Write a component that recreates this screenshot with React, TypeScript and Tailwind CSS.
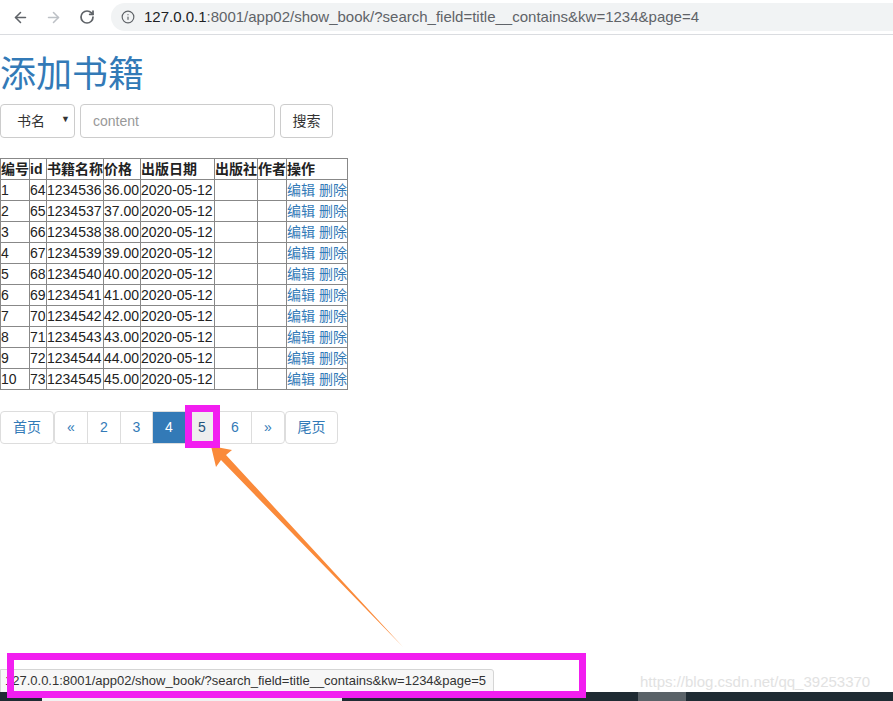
import { ArrowLeft, ArrowRight, RotateCw, Info } from 'lucide-react';

const rows = Array.from({ length: 10 }, (_, i) => ({
    no: i + 1,
    id: 64 + i,
    title: String(1234536 + i),
    price: `${36 + i}.00`,
    date: '2020-05-12',
}));

const colWidths = [29, 17, 57, 37, 74, 43, 28, 60];
const headers = ['编号', 'id', '书籍名称', '价格', '出版日期', '出版社', '作者', '操作'];

const pageUrl = '127.0.0.1:8001/app02/show_book/?search_field=title__contains&kw=1234&page=';

function PageItem({
    label,
    className = '',
}: {
    label: string;
    className?: string;
}) {
    return (
        <a
            className={`flex h-[33px] items-center justify-center border border-[#ddd] text-[14px] text-[#337ab7] ${className}`}
        >
            {label}
        </a>
    );
}

export default function App() {
    return (
        <div
            className="relative h-[701px] w-[893px] overflow-hidden bg-white text-[#333]"
            style={{ fontFamily: '"Liberation Sans", "Noto Sans CJK SC", sans-serif' }}
        >
            {/* Browser toolbar */}
            <div className="flex h-[35px] items-center border-b border-[#dadce0] pl-[12px]">
                <ArrowLeft className="h-[17px] w-[17px] text-[#5f6368]" strokeWidth={2.2} />
                <ArrowRight className="ml-[16px] h-[17px] w-[17px] text-[#bdc1c6]" strokeWidth={2.2} />
                <RotateCw className="ml-[17px] h-[16px] w-[16px] text-[#5f6368]" strokeWidth={2.6} />
                <div className="ml-[16px] flex h-[28px] flex-1 items-center rounded-l-full bg-[#f1f3f4] pl-[10px]">
                    <Info className="h-[14px] w-[14px] text-[#5f6368]" strokeWidth={2} />
                    <span className="ml-[9px] text-[15px] text-[#5f6368]">
                        <span className="text-[#202124]">127.0.0.1</span>
                        :8001/app02/show_book/?search_field=title__contains&amp;kw=1234&amp;page=4
                    </span>
                </div>
            </div>

            {/* Page content */}
            <div className="flex flex-col items-start">
                <h1 className="mt-[20px] mb-[9px] h-[40px] text-[36px] leading-[40px] font-normal text-[#337ab7]">
                    添加书籍
                </h1>

                <div className="flex items-center">
                    <div className="relative flex h-[34px] w-[75px] items-center rounded-[4px] border border-[#ccc] pl-[16px] text-[14px] text-[#333]">
                        书名
                        <span className="absolute right-[4px] top-[8px] text-[9px]">▼</span>
                    </div>
                    <div className="ml-[5px] flex h-[34px] w-[195px] items-center rounded-[4px] border border-[#ccc] pl-[12px] text-[14px] text-[#999]">
                        content
                    </div>
                    <div className="ml-[5px] flex h-[34px] w-[53px] items-center justify-center rounded-[4px] border border-[#ccc] text-[14px] text-[#333]">
                        搜索
                    </div>
                </div>

                {/* Book table */}
                <table className="mt-[20px] table-fixed border-collapse border border-[#333] text-[14px] leading-[20px] text-[#222]">
                    <colgroup>
                        {colWidths.map((w, i) => (
                            <col key={i} style={{ width: w }} />
                        ))}
                    </colgroup>
                    <thead>
                        <tr className="h-[21px]">
                            {headers.map((h) => (
                                <th key={h} className="overflow-hidden whitespace-nowrap border border-[#888] p-0 text-left font-bold">
                                    {h}
                                </th>
                            ))}
                        </tr>
                    </thead>
                    <tbody>
                        {rows.map((r) => (
                            <tr key={r.no} className="h-[21px]">
                                <td className="border border-[#888] p-0">{r.no}</td>
                                <td className="border border-[#888] p-0">{r.id}</td>
                                <td className="border border-[#888] p-0">{r.title}</td>
                                <td className="border border-[#888] p-0">{r.price}</td>
                                <td className="border border-[#888] p-0">{r.date}</td>
                                <td className="border border-[#888] p-0"></td>
                                <td className="border border-[#888] p-0"></td>
                                <td className="overflow-hidden whitespace-nowrap border border-[#888] p-0 text-[#337ab7]">
                                    编辑 删除
                                </td>
                            </tr>
                        ))}
                    </tbody>
                </table>

                {/* Pagination */}
                <div className="mt-[21px] flex">
                    <PageItem label="首页" className="w-[54px] rounded-[4px]" />
                    <div className="flex">
                        <PageItem label="«" className="w-[34px] rounded-l-[4px]" />
                        <PageItem label="2" className="-ml-px w-[34px]" />
                        <PageItem label="3" className="-ml-px w-[33px]" />
                        <PageItem label="4" className="-ml-px w-[34px] border-[#337ab7] bg-[#337ab7] text-white" />
                        <PageItem label="5" className="-ml-px w-[34px] bg-[#eee] text-[#23527c]" />
                        <PageItem label="6" className="-ml-px w-[34px]" />
                        <PageItem label="»" className="-ml-px w-[34px] rounded-r-[4px]" />
                    </div>
                    <PageItem label="尾页" className="w-[53px] rounded-[4px]" />
                </div>
            </div>

            {/* Annotation arrow */}
            <svg className="pointer-events-none absolute left-0 top-0" width="893" height="701">
                <polygon
                    points="211,446 232,450 226,455 403,647 221,460 216,467"
                    fill="#fa8a3a"
                />
            </svg>

            {/* Highlight box around page 5 */}
            <div className="absolute left-[185px] top-[405px] h-[43px] w-[35px] border-[7px] border-[#f21ef0]" />

            {/* Status bubble */}
            <div className="absolute left-0 top-[669px] h-[24px] w-[494px] rounded-tr-[3px] border border-[#d5d5d5] bg-[#f7f7f7] pl-[4px] text-[13px] leading-[22px] text-[#333]">
                {pageUrl}5
            </div>

            {/* Watermark */}
            <div className="absolute left-[640px] top-[671px] text-[15px] text-[#e2e2e2]">
                https://blog.csdn.net/qq_39253370
            </div>

            {/* Taskbar */}
            <div className="absolute bottom-0 left-0 flex h-[9px] w-full bg-[#1f2b33]">
                <div className="ml-[42px] h-full w-[300px] bg-[#f2f2f2]" />
                <div className="ml-[296px] h-full w-[48px] bg-[#5a6268]" />
            </div>

            {/* Highlight box around status bubble */}
            <div className="absolute left-[7px] top-[653px] h-[45px] w-[579px] border-[7px] border-[#f21ef0]" />
        </div>
    );
}
